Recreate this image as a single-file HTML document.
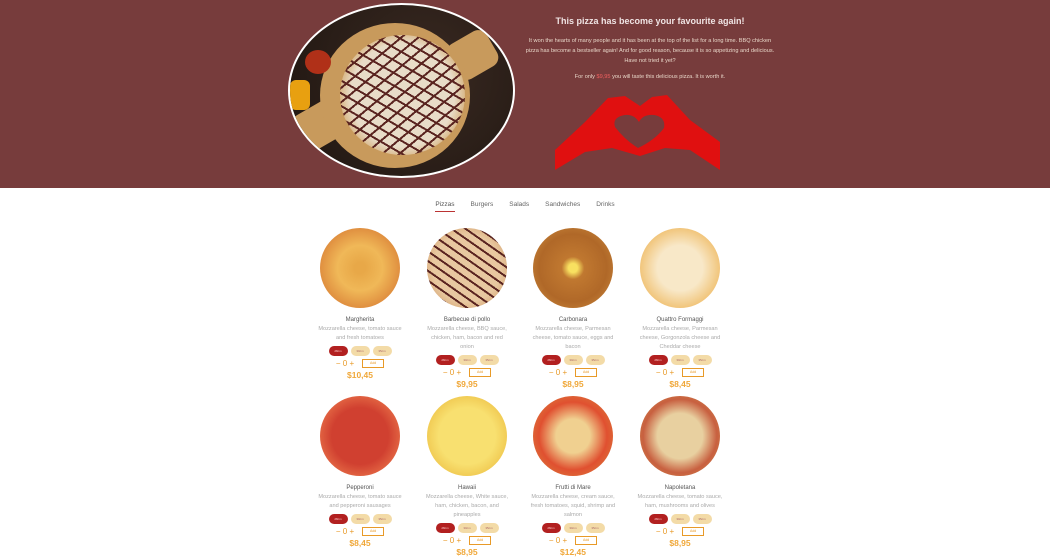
<!DOCTYPE html>
<html><head><meta charset="utf-8"><style>
*{margin:0;padding:0;box-sizing:border-box}
body{width:1050px;height:560px;overflow:hidden;background:#fff;font-family:"Liberation Sans",sans-serif;position:relative}
.hero{position:absolute;left:0;top:0;width:1050px;height:188px;background:#773c3c}
.oval{position:absolute;left:288px;top:3px;width:227px;height:175px;border-radius:50%;border:2px solid #fff;overflow:hidden;background:radial-gradient(circle at 60% 40%,#3a2a22,#1e1510)}
.board{position:absolute;left:30px;top:18px;width:150px;height:145px;border-radius:50%;background:#c89a5c}
.handle1{position:absolute;left:5px;top:100px;width:50px;height:40px;background:#c89a5c;border-radius:10px;transform:rotate(-30deg)}
.handle2{position:absolute;left:160px;top:30px;width:45px;height:40px;background:#c89a5c;border-radius:10px;transform:rotate(-30deg)}
.pz{position:absolute;left:50px;top:30px;width:125px;height:120px;border-radius:50%;background:repeating-linear-gradient(30deg,transparent 0 9px,#5a2420 9px 11px),repeating-linear-gradient(-40deg,transparent 0 9px,#5a2420 9px 11px),radial-gradient(circle,#e8dcc8 60%,#d9b88a 72%,#b8884c)}
.h1{position:absolute;left:520px;top:16px;width:260px;text-align:center;color:#f0e4e4;font-size:9px;font-weight:bold}
.p{position:absolute;left:525px;width:250px;text-align:center;color:#e8d6c8;font-size:5.6px;line-height:10px}
.tabs{position:absolute;top:201px;left:0;width:1050px;text-align:center;font-size:6.5px;color:#666}
.tabs span{margin:0 8px}
.card{position:absolute;width:104px;text-align:center}
.img{width:80px;height:80px;border-radius:50%;margin:0 auto}
.nm{font-size:6px;color:#555;margin-top:9px}
.ds{font-size:5.6px;color:#aaa;line-height:9px;margin-top:2px;padding:0 9px}
.ch{margin-top:3px;display:flex;justify-content:center;gap:3px}
.ch i{display:block;width:19px;height:10px;border-radius:5px;background:#f3dba7;font-size:3px;color:#a66;font-style:normal;line-height:10px}
.ch i:first-child{background:#b22020;color:#fcc}
.q{margin-top:3px;font-size:8px;color:#e89a28;display:flex;justify-content:center;align-items:center;gap:4px}
.q b{display:inline-block;width:22px;height:9px;border:1px solid #e89a28;font-size:3.5px;line-height:7px;font-weight:normal;margin-left:4px}
.pr{font-size:8.5px;color:#f0a83a;font-weight:bold;margin-top:2px}
</style></head><body>
<div class="hero">
<div class="oval"><div class="handle1"></div><div class="handle2"></div><div class="board"></div><div class="pz"></div>
<div style="position:absolute;left:0;top:75px;width:20px;height:30px;background:#e8a010;border-radius:6px"></div>
<div style="position:absolute;left:15px;top:45px;width:26px;height:24px;border-radius:50%;background:#b03018"></div></div>
<div class="h1">This pizza has become your favourite again!</div>
<div class="p" style="top:36px">It won the hearts of many people and it has been at the top of the list for a long time. BBQ chicken pizza has become a bestseller again! And for good reason, because it is so appetizing and delicious. Have not tried it yet?</div>
<div class="p" style="top:72px">For only <span style="color:#f06060">$9,95</span> you will taste this delicious pizza. It is worth it.</div>
<svg style="position:absolute;left:0;top:0" width="1050" height="188"><path fill="#e01010" fill-rule="evenodd" d="M555 150 L585 122 L608 98 L625 96 L640 106 L652 97 L667 95 L690 120 L720 142 L720 170 L690 150 L665 148 L640 156 L612 148 L585 152 L555 170 Z M625 115 Q612 117 615 127 Q625 140 638 148 Q655 140 664 128 Q666 117 654 115 Q643 114 639 122 Q634 114 625 115 Z"/></svg>
</div>
<div class="tabs"><span style="border-bottom:1px solid #b33;padding-bottom:3px;color:#555">Pizzas</span><span>Burgers</span><span>Salads</span><span>Sandwiches</span><span>Drinks</span></div>
<div id="c"></div>
<script>
var d=[
["Margherita","Mozzarella cheese, tomato sauce and fresh tomatoes","$10,45","radial-gradient(circle,#e8a848 10%,#f0b858 40%,#e09040 70%,#c87a3a)"],
["Barbecue di pollo","Mozzarella cheese, BBQ sauce, chicken, ham, bacon and red onion","$9,95","repeating-linear-gradient(35deg,transparent 0 6px,#5a2420 6px 8px),radial-gradient(circle,#e8c8a0 60%,#c88a50)"],
["Carbonara","Mozzarella cheese, Parmesan cheese, tomato sauce, eggs and bacon","$8,95","radial-gradient(circle,#f8e060 8%,#c07830 20%,#b06828 60%,#d09040)"],
["Quattro Formaggi","Mozzarella cheese, Parmesan cheese, Gorgonzola cheese and Cheddar cheese","$8,45","radial-gradient(circle,#f8e8c8 40%,#f0c070 75%,#d89848)"],
["Pepperoni","Mozzarella cheese, tomato sauce and pepperoni sausages","$8,45","radial-gradient(circle,#d04030 50%,#e06040 70%,#d8a060)"],
["Hawaii","Mozzarella cheese, White sauce, ham, chicken, bacon, and pineapples","$8,95","radial-gradient(circle,#f8e070 50%,#f0c850 75%,#d89840)"],
["Frutti di Mare","Mozzarella cheese, cream sauce, fresh tomatoes, squid, shrimp and salmon","$12,45","radial-gradient(circle,#f0d090 30%,#e05030 60%,#d89040)"],
["Napoletana","Mozzarella cheese, tomato sauce, ham, mushrooms and olives","$8,95","radial-gradient(circle,#e8d0a0 40%,#c86040 65%,#d09848)"]];
var xs=[360,467,573,680],h="";
d.forEach(function(c,i){var x=xs[i%4]-52,y=i<4?228:396;
h+='<div class="card" style="left:'+x+'px;top:'+y+'px"><div class="img" style="background:'+c[3]+'"></div><div class="nm">'+c[0]+'</div><div class="ds">'+c[1]+'</div><div class="ch"><i>28cm</i><i>30cm</i><i>35cm</i></div><div class="q">&minus; 0 +<b>Add</b></div><div class="pr">'+c[2]+'</div></div>';});
document.getElementById("c").innerHTML=h;
</script>
</body></html>
